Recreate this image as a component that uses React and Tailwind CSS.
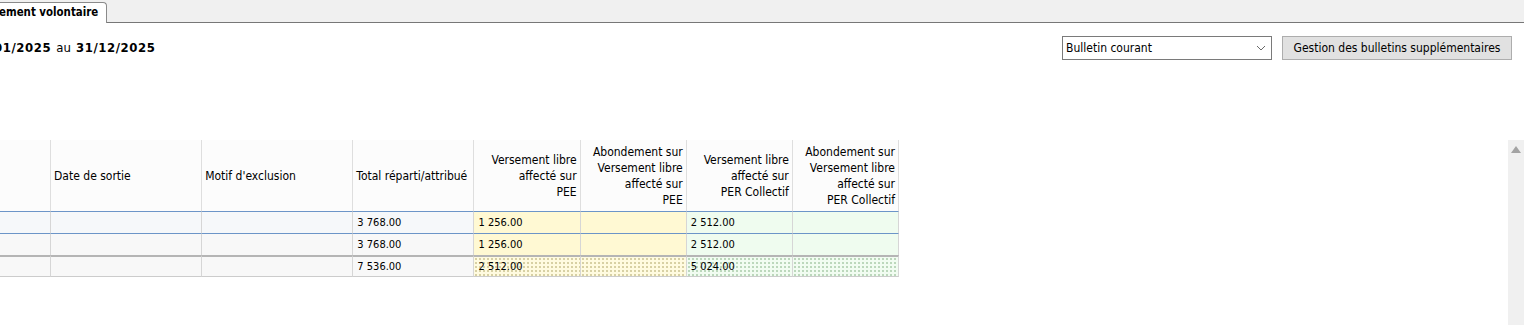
import React from "react";

const font = "font-['Tahoma','DejaVu_Sans_Condensed','DejaVu_Sans',sans-serif]";

const cols = [51, 151, 151, 121, 106, 106, 106, 106];

const headers = [
  { lines: [""], align: "left" },
  { lines: ["Date de sortie"], align: "left" },
  { lines: ["Motif d'exclusion"], align: "left" },
  { lines: ["Total réparti/attribué"], align: "left" },
  { lines: ["Versement libre", "affecté sur", "PEE"], align: "right" },
  { lines: ["Abondement sur", "Versement libre", "affecté sur", "PEE"], align: "right" },
  { lines: ["Versement libre", "affecté sur", "PER Collectif"], align: "right" },
  { lines: ["Abondement sur", "Versement libre", "affecté sur", "PER Collectif"], align: "right" },
];

const rows = [
  ["", "", "", "3 768.00", "1 256.00", "", "2 512.00", ""],
  ["", "", "", "3 768.00", "1 256.00", "", "2 512.00", ""],
];
const total = ["", "", "", "7 536.00", "2 512.00", "", "5 024.00", ""];

function cellBg(i, ri) {
  if (i === 4 || i === 5) return "bg-[#fff9d3]";
  if (i >= 6) return "bg-[#effcef]";
  return ri === 0 ? "bg-[#f6f8fa]" : "bg-[#f8f8f8]";
}
function totalBg(i) {
  if (i === 4 || i === 5)
    return "bg-[#fffbe0] bg-[image:radial-gradient(#d6cfa2_0.7px,transparent_0.9px)] bg-[size:4px_4px]";
  if (i >= 6)
    return "bg-[#f1fcf1] bg-[image:radial-gradient(#b9d6b9_0.7px,transparent_0.9px)] bg-[size:4px_4px]";
  return "bg-[#f8f8f8]";
}

export default function App() {
  return (
    <div className={`w-[1524px] h-[325px] overflow-hidden bg-white text-black ${font}`}>
      {/* tab strip */}
      <div className="h-[23px] bg-[#f0f0f0] border-b border-[#777777] flex items-end">
        <div className="h-[21px] -mb-px w-[107px] bg-white border-t border-r border-[#8a8a8a] rounded-tr-[4px] flex items-center overflow-hidden">
          <span className="text-[11.4px] font-bold whitespace-nowrap leading-none -ml-px">ement volontaire</span>
        </div>
      </div>

      {/* period + controls */}
      <div className="flex items-center justify-between mt-[13px] h-[24px] pr-[12px]">
        <div className="text-[13px] whitespace-nowrap -ml-[6px] flex items-baseline gap-[5px]">
          <span className="font-bold tracking-[0.6px]">01/2025</span>
          <span>au</span>
          <span className="font-bold tracking-[0.6px]">31/12/2025</span>
        </div>
        <div className="flex items-center gap-[10px]">
          <div className="w-[210px] h-[24px] border border-[#7a7a7a] bg-white flex items-center justify-between pl-[3px] pr-[4px]">
            <span className="text-[12px]">Bulletin courant</span>
            <svg width="10" height="6" viewBox="0 0 10 6" className="mr-[1px]">
              <polyline points="1,1 5,5 9,1" fill="none" stroke="#6b6b6b" strokeWidth="1" />
            </svg>
          </div>
          <div className="w-[230px] h-[24px] border border-[#adadad] bg-[#e1e1e1] flex items-center justify-center">
            <span className="text-[12px]">Gestion des bulletins supplémentaires</span>
          </div>
        </div>
      </div>

      {/* table area */}
      <div className="flex mt-[80px]">
        <div className="flex-1">
          <table className="border-separate border-spacing-0 table-fixed text-[11px]" style={{ width: 899 }}>
            <colgroup>
              {cols.map((w, i) => (
                <col key={i} style={{ width: w }} />
              ))}
            </colgroup>
            <thead>
              <tr className="h-[71px]">
                {headers.map((h, i) => (
                  <th
                    key={i}
                    className={`bg-[#fcfcfc] font-normal text-[12px] align-middle border-r border-[#dedede] leading-[16px] pt-[1px] ${
                      h.align === "right" ? "text-right pr-[3px]" : "text-left pl-[3px]"
                    }`}
                  >
                    {h.lines.map((l, j) => (
                      <div key={j} className="whitespace-nowrap">{l}</div>
                    ))}
                  </th>
                ))}
              </tr>
            </thead>
            <tbody>
              {rows.map((r, ri) => (
                <tr key={ri} className="h-[22px]">
                  {r.map((c, i) => (
                    <td
                      key={i}
                      className={`${cellBg(i, ri)} border-t border-r border-t-[#6c95c8] border-r-[#d6d6d6] pl-[4px] whitespace-nowrap leading-none`}
                    >
                      {c}
                    </td>
                  ))}
                </tr>
              ))}
              <tr className="h-[22px]">
                {total.map((c, i) => (
                  <td
                    key={i}
                    className={`${totalBg(i)} border-t-2 border-b border-r border-t-[#b5b5b5] border-b-[#cccccc] border-r-[#d6d6d6] pl-[4px] whitespace-nowrap leading-none`}
                  >
                    {c}
                  </td>
                ))}
              </tr>
            </tbody>
          </table>
        </div>
        <div className="w-[16px] h-[185px] bg-[#f0f0f0] flex justify-center pt-[6px]">
          <svg width="10" height="7" viewBox="0 0 10 7">
            <polygon points="5,0 10,7 0,7" fill="#a3a3a3" />
          </svg>
        </div>
      </div>
    </div>
  );
}
